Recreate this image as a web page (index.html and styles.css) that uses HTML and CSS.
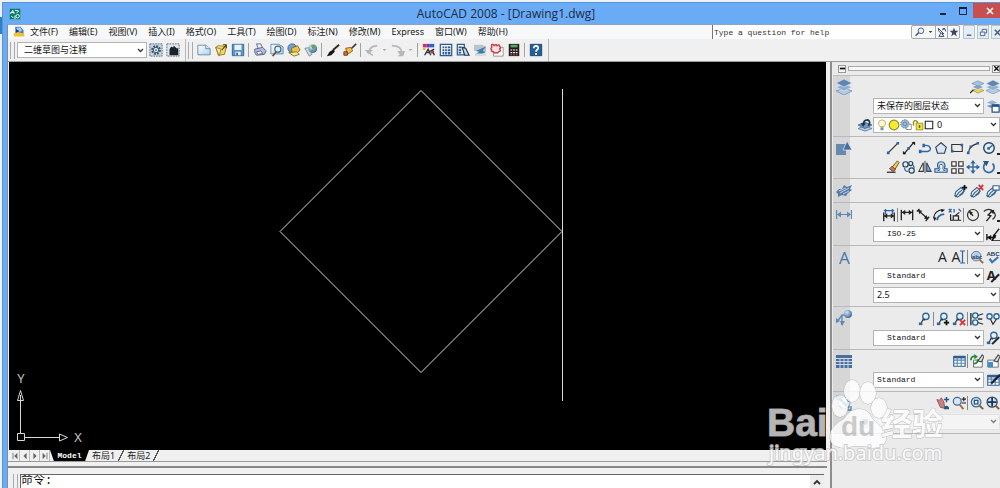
FILE: index.html
```html
<!DOCTYPE html>
<html lang="zh-CN">
<head>
<meta charset="utf-8">
<title>AutoCAD 2008 - [Drawing1.dwg]</title>
<link rel="stylesheet" href="styles.css">
</head>
<body>
<svg class="sprite" aria-hidden="true">
  <defs>
    <linearGradient id="paper" x1="0" y1="0" x2="1" y2="1"><stop offset="0" stop-color="#fff"/><stop offset="1" stop-color="#a9d3ee"/></linearGradient>
    <radialGradient id="ball" cx=".35" cy=".3" r=".8"><stop offset="0" stop-color="#cfe2f5"/><stop offset="1" stop-color="#2e5f99"/></radialGradient>
  </defs>
  <symbol id="logo" viewBox="0 0 16 16"><path fill="#0d7a69" d="M1 1h14v14H1z"/><path fill="none" stroke="#e8fff8" stroke-width="1.3" d="M2 8l3-5 2 5M8 3l5 1-3 3M3 11l3 2M8 10v5M2 6h5"/><circle cx="11.500" cy="11" r="2.300" fill="none" stroke="#e8fff8" stroke-width="1.300"/></symbol>
  <symbol id="doc" viewBox="0 0 16 16"><path fill="#3f7fc4" d="M3 1h7l4 5v6H3z"/><path fill="#9fd0f2" d="M5 2h5l2 4-4 3-4-1z"/><path fill="#f4c12c" d="M1 10l4-2 10 2v4H1z"/><path fill="#1e3e66" d="M4 4l5 3-5 2z"/></symbol>
  <symbol id="gear" viewBox="0 0 16 16"><path fill="#c9d4df" stroke="#53687e" stroke-dasharray="2 1" d="M1 1h14v14H1z"/><circle cx="8" cy="8" r="4" fill="none" stroke="#33506e" stroke-width="3" stroke-dasharray="2 1.100"/><circle cx="8" cy="8" r="3" fill="#e7eef5" stroke="#33506e"/><circle cx="8" cy="8" r="1" fill="#33506e"/></symbol>
  <symbol id="home" viewBox="0 0 16 16"><path fill="#e3e6e9" stroke="#53687e" stroke-dasharray="2 1" d="M1 1h14v14H1z"/><path fill="#1c2229" d="M4 14V7l2-3 2 1 1-2 3 3h2v8z"/></symbol>
  <symbol id="new" viewBox="0 0 16 16"><path fill="url(#paper)" stroke="#5f87a7" d="M1 2.500h9l5 4v7H1z"/><path fill="#dff0fb" stroke="#5f87a7" d="M10 2.500v4h5"/></symbol>
  <symbol id="open" viewBox="0 0 16 16"><path fill="#f2d668" stroke="#94762a" d="M2 5l3-2 9 1-2 9-7 1z"/><path fill="#fff0a8" stroke="#94762a" d="M2 5l6 2-2 8z"/><path d="M9 8l5-6M10 2h4v4" fill="none" stroke="#4d3c12" stroke-width="1.300"/></symbol>
  <symbol id="save" viewBox="0 0 16 16"><path fill="#5b93c5" stroke="#2f608f" d="M1.500 1.500h13v13h-13z"/><path fill="#e8f2fa" d="M4 2h8v6H4zM5 10h6v4H5z"/><path fill="#2f608f" d="M6 11h2v3H6z"/></symbol>
  <symbol id="print" viewBox="0 0 16 16"><path fill="#eef0f6" stroke="#5d6285" d="M4 1h5l2 5-5 1z"/><path fill="#b5bcdd" stroke="#535a86" d="M2 7l9-2 4 4-2 4-9 1-2-3z"/><path fill="#fff" stroke="#535a86" d="M4 10l5-1 2 3-5 1z"/></symbol>
  <symbol id="preview" viewBox="0 0 16 16"><path fill="url(#paper)" stroke="#5f87a7" d="M1 1.500h9l5 3v8H1z"/><circle cx="9" cy="7" r="3.500" fill="#d9effc" stroke="#476780" stroke-width="1.300"/><path stroke="#7a4f36" stroke-width="2" d="M7 10l-4 5"/></symbol>
  <symbol id="publish" viewBox="0 0 16 16"><circle cx="6" cy="6" r="5" fill="#6fa3d1" stroke="#345f8a"/><path fill="#e8c348" stroke="#7e6523" d="M5 6l7-3 3 5-3 3-6 1z"/><path fill="#f8e9a2" stroke="#7e6523" d="M2 11l9-1 3 3-6 2z"/></symbol>
  <symbol id="globe" viewBox="0 0 16 16"><path fill="#d6d9dd" stroke="#7b848c" d="M1 6l7-1 1 8-3 2z"/><circle cx="10" cy="6.500" r="5" fill="url(#ball)"/><path fill="#66a547" d="M8 3l4-1 1 3-3 2zM8 8l4 0-2 3z"/></symbol>
  <symbol id="brush" viewBox="0 0 16 16"><path stroke="#3a2b1a" stroke-width="2.200" d="M15 2L8 8"/><path fill="#161616" d="M9 7l1 3-4 4-5 1 3-5z"/></symbol>
  <symbol id="paint" viewBox="0 0 16 16"><path fill="#f0c050" stroke="#8b4c1d" d="M3 6l6-1 2 4-6 4z"/><path stroke="#3d3d3d" stroke-width="2" d="M10 6l5-5"/><path fill="#d8762b" stroke="#5e371c" d="M1 10h4v4H1z"/></symbol>
  <symbol id="undo" viewBox="0 0 16 16"><path fill="none" stroke="#b5b9bd" stroke-width="2" d="M9 14C2 12 4 4 14 3"/><path fill="#b5b9bd" d="M0 8h9l-5 5z"/></symbol>
  <symbol id="redo" viewBox="0 0 16 16"><path fill="none" stroke="#b5b9bd" stroke-width="2" d="M1 3c7 0 11 2 11 8"/><path fill="#b5b9bd" d="M7 9h9l-2 6H7l3-2z"/></symbol>
  <symbol id="props" viewBox="0 0 16 16"><path fill="#d22d6c" d="M1 1h4v4H1z"/><path fill="#7a35b5" d="M5 1h4v4H5z"/><path fill="#2e65c0" d="M9 1h5v4H9z"/><path fill="#e9b634" d="M1 5h3v3H1z"/><path fill="none" stroke="#283039" stroke-width="1.500" d="M3 14l4-7 3 7M8 10l6-3M12 8l2 6M5 11h4"/><path fill="#c03636" d="M10 9h3v3h-3z"/></symbol>
  <symbol id="grid" viewBox="0 0 16 16"><path fill="#eef5fc" stroke="#315a8b" stroke-width="1.400" d="M1.500 1.500h13v13h-13z"/><path fill="#315a8b" d="M4 4h2v2H4zM7 4h2v2H7zM10 4h3v2h-3zM4 7h2v2H4zM7 7h2v2H7zM10 7h3v2h-3zM4 10h2v3H4zM7 10h2v3H7zM10 10h3v3h-3z"/></symbol>
  <symbol id="palette" viewBox="0 0 16 16"><path fill="#f2f6fb" stroke="#315a8b" stroke-width="1.400" d="M1.500 1.500h8v12h-8z"/><path fill="#315a8b" d="M3 4h3v2H3zM3 7h3v2H3zM3 10h3v2H3z"/><path fill="#c6d6e8" stroke="#243952" stroke-width="1.400" d="M7 5l4 1 4 8h-5z"/></symbol>
  <symbol id="sheet" viewBox="0 0 16 16"><path fill="#b9c5ce" d="M1 2h9l5 2v5H1z"/><path fill="#3f7cae" d="M15 4L3 9l4 1-5 3h8l5-3-4-1z"/><path fill="#d5dde3" d="M3 12h12v3H3z"/></symbol>
  <symbol id="markup" viewBox="0 0 16 16"><path fill="#fff" stroke="#8a8a8a" d="M4 5h11v10H4z"/><path fill="#fbe3e5" stroke="#d33543" stroke-width="1.600" d="M2 2q2-1 3 1 2-2 3 0 3-2 3 1 2 2 0 3 2 3-1 3-1 2-3 1-2 1-3-1-3 0-2-2-2-2 0-3z"/></symbol>
  <symbol id="calc" viewBox="0 0 16 16"><path fill="#241f1e" d="M2 1h12v14H2z"/><path fill="#4fa96b" d="M4 2h8v3H4z"/><path stroke="#fff" stroke-width="1.400" stroke-dasharray="2 1" d="M4 8h8M4 11h8"/><path stroke="#c4483e" stroke-width="1.400" stroke-dasharray="2 1" d="M4 13.500h8"/></symbol>
  <symbol id="help" viewBox="0 0 16 16"><path fill="#245f98" stroke="#123e6b" d="M1.500 1.500h13v13h-13z"/><path fill="none" stroke="#fff" stroke-width="2" d="M5.500 6c0-4 5.500-3 5 0-.5 2-2.500 1.500-2.500 4"/><circle cx="8" cy="12.500" r="1.200" fill="#fff"/></symbol>
  <symbol id="search" viewBox="0 0 16 16"><circle cx="9.500" cy="6" r="4.500" fill="#e9f1fa" stroke="#4c5f7e" stroke-width="1.500"/><path stroke="#4c5f7e" stroke-width="2.600" d="M6 9l-5 5"/></symbol>
  <symbol id="antenna" viewBox="0 0 16 16"><path fill="none" stroke="#3b4d70" stroke-width="1.600" d="M2 2q0 8 9 9L2 2M6 10l-3 5h8l-3-4M9 2q5 0 5 5M8 5l5-3"/></symbol>
  <symbol id="star" viewBox="0 0 16 16"><path fill="#35486c" d="M8 1l2 5h5l-4 3.500L12.500 15 8 11.700 3.500 15 5 9.500 1 6h5z"/></symbol>
  <symbol id="layers" viewBox="0 0 16 16"><path fill="#b3cbe3" stroke="#5c7ea4" stroke-width=".6" d="M0 12l8-3 8 3-8 4z"/><path fill="#8caed0" stroke="#e4edf6" stroke-width=".6" d="M0 8l8-3 8 3-8 4z"/><path fill="#5f86b1" stroke="#e4edf6" stroke-width=".6" d="M0 4l8-4 8 4-8 4z"/></symbol>
  <symbol id="layeradd" viewBox="0 0 16 16"><path fill="#e8cf4f" stroke="#8e8337" stroke-width=".6" d="M3 12l7-3 6 3-7 3z"/><path fill="#7fa5c9" stroke="#fff" stroke-width=".6" d="M2 8l7-3 7 3-7 3z"/><path fill="#a8c2dc" stroke="#587ca2" stroke-width=".6" d="M2 4l7-3 7 3-7 3z"/><path stroke="#222" stroke-width="1.500" d="M0 15l4-4"/></symbol>
  <symbol id="layerwin" viewBox="0 0 16 16"><path fill="#6f98c1" stroke="#fff" stroke-width=".6" d="M0 8l7-3 7 3-7 3z"/><path fill="#93b4d4" stroke="#fff" stroke-width=".6" d="M0 4l7-3 7 3-7 3z"/><path fill="#fff" stroke="#255384" stroke-width="1.400" d="M7 7h8v8H7z"/><path fill="#255384" d="M7 6h8v3H7z"/></symbol>
  <symbol id="layerprev" viewBox="0 0 16 16"><path fill="#b3cbe3" stroke="#5c7ea4" d="M0 12l8-3 8 3-8 3z"/><path fill="#7399bf" stroke="#47698f" d="M0 8l8-3 8 3-8 4z"/><path fill="none" stroke="#1e3555" stroke-width="2" d="M6 8q0-6 5-6 4 2 1 7"/><path fill="#1e3555" d="M3 6h6L6 10z"/></symbol>
  <symbol id="bulb" viewBox="0 0 16 16"><path fill="#fffbcf" stroke="#b5a24c" d="M5 10Q2 7 4 3q4-4 8 0 2 4-1 7z"/><path fill="#7b90a6" d="M6 11h4v4H6z"/></symbol>
  <symbol id="sun" viewBox="0 0 16 16"><circle cx="8" cy="8" r="6.500" fill="#f6ec2c" stroke="#8e8c2b" stroke-width="1.500"/></symbol>
  <symbol id="frz" viewBox="0 0 16 16"><path fill="#fff" stroke="#6c737b" d="M8 7h7v7H8z"/><circle cx="6.500" cy="6.500" r="5.500" fill="#9fb9d0" stroke="#54799d" stroke-width="1.300" stroke-dasharray="2 1"/><circle cx="6.500" cy="6.500" r="2.500" fill="none" stroke="#54799d"/></symbol>
  <symbol id="lock" viewBox="0 0 16 16"><path fill="none" stroke="#9a9226" stroke-width="2" d="M2 9V4q2-4 5 0v3"/><path fill="#f1e436" stroke="#8b8322" d="M5.500 5.500h9v9h-9z"/><path fill="#6b6516" d="M9 8h2v4H9z"/></symbol>
  <symbol id="swatch" viewBox="0 0 16 16"><path fill="#fff" stroke="#222" stroke-width="1.700" d="M2 2h12v12H2z"/></symbol>
  <symbol id="shapes" viewBox="0 0 16 16"><path fill="#6789ae" d="M0 4h10v11H0z"/><path fill="#486f9e" stroke="#dfe6ee" stroke-width=".7" d="M11 1l5 9H7z"/></symbol>
  <symbol id="line" viewBox="0 0 16 16"><path stroke="#333" stroke-width="1.400" d="M3 13L13 3"/><path fill="#2c66a8" d="M1 12h3v3H1zM12 1h3v3h-3z"/></symbol>
  <symbol id="xline" viewBox="0 0 16 16"><path stroke="#222" stroke-width="1.500" d="M2 15L14 1"/><path fill="#2c66a8" d="M6 7h3v3H6z"/><path fill="#222" d="M11 1h4v4zM1 11v4h4z"/></symbol>
  <symbol id="pline" viewBox="0 0 16 16"><path fill="none" stroke="#2c66a8" stroke-width="1.600" d="M2 12h9q4-1 3-4-1-3-5-3H7"/><path fill="#2c66a8" d="M1 10h3v4H1zM5 3h3v4H5z"/></symbol>
  <symbol id="polygon" viewBox="0 0 16 16"><path fill="#dbe5ef" stroke="#27445f" stroke-width="1.300" d="M8 2l6 5-2 7H4L2 7z"/></symbol>
  <symbol id="rect" viewBox="0 0 16 16"><path fill="none" stroke="#333" stroke-width="1.300" d="M2 4h12v8H2z"/><path fill="#2c66a8" d="M1 10h3v3H1zM12 3h3v3h-3z"/></symbol>
  <symbol id="arc" viewBox="0 0 16 16"><path fill="none" stroke="#333" stroke-width="1.300" d="M3 13Q4 5 13 3"/><path fill="#2c66a8" d="M1 12h3v3H1zM4 5h3v3H4zM12 1h3v3h-3z"/></symbol>
  <symbol id="circle" viewBox="0 0 16 16"><circle cx="8" cy="8" r="6" fill="#e6edf4" stroke="#27445f" stroke-width="1.600"/><path stroke="#2c66a8" stroke-width="1.500" d="M8 8l4-3"/><path fill="#2c66a8" d="M6 7h3v3H6z"/></symbol>
  <symbol id="erase" viewBox="0 0 16 16"><path fill="#f0c94d" stroke="#5d4b24" d="M7 8l6-7 2 2-5 8z"/><path fill="#d76c64" stroke="#5d4b24" d="M4 10l3-3 4 4-3 2z"/><path stroke="#333" stroke-width="1.500" d="M1 14h10"/></symbol>
  <symbol id="copy" viewBox="0 0 16 16"><g fill="#e4ebf2" stroke="#27445f" stroke-width="1.400"><circle cx="4" cy="5" r="3"/><circle cx="10" cy="4" r="2.300"/><circle cx="11" cy="12" r="3"/></g><path fill="none" stroke="#2c66a8" stroke-width="1.400" d="M3 9q0 4 4 4M13 6l1 3"/></symbol>
  <symbol id="mirror" viewBox="0 0 16 16"><path fill="#fff" stroke="#333" stroke-width="1.200" d="M6 3v10H1z"/><path fill="#89a9c9" stroke="#27445f" stroke-width="1.200" d="M10 3v10h5z"/><path stroke="#333" d="M8 1v14"/></symbol>
  <symbol id="offset" viewBox="0 0 16 16"><path fill="#c6d9eb" stroke="#2c5e91" stroke-width="1.300" d="M1 14v-4h4Q2 2 8 2t4 8h3v4z"/><path fill="#fff" stroke="#2c5e91" d="M4 12h2l1-2Q5 5 8 5t2 5l1 2h2"/></symbol>
  <symbol id="array" viewBox="0 0 16 16"><path fill="#fff" stroke="#333" stroke-width="1.300" d="M2 2h5v5H2zM10 2h5v5h-5zM2 10h5v5H2zM10 10h5v5h-5z"/></symbol>
  <symbol id="move" viewBox="0 0 16 16"><path stroke="#386fa7" stroke-width="1.700" d="M8 2v12M2 8h12"/><path fill="#2c66a8" d="M8 0l3 4H5zM8 16l3-4H5zM0 8l4-3v6zM16 8l-4-3v6z"/></symbol>
  <symbol id="rotate" viewBox="0 0 16 16"><path fill="none" stroke="#386fa7" stroke-width="2" d="M5 3a6 6 0 1 0 7 1"/><path fill="#27568a" d="M1 1h7L5 7z"/></symbol>
  <symbol id="stamp" viewBox="0 0 16 16"><path fill="#557ca8" d="M0 10l3-3 3 0 2-4 3 2 5-2-2 4 2 1-4 3-2 3-4-1-4 2 0-3z"/><path stroke="#dbe4ee" stroke-width=".8" d="M4 11l9-5M3 9l7-3M7 12l6-3"/></symbol>
  <symbol id="blk" viewBox="0 0 16 16"><path fill="#e8f0f7" stroke="#33638f" stroke-width="1.300" d="M2 9l6-5 3 3-1 4-6 4-3-2z"/><path fill="none" stroke="#33638f" stroke-width="1.300" d="M4 11l5-4M6 13l6-5M1 15l4-4"/></symbol>
  <symbol id="blkadd" viewBox="0 0 16 16"><use href="#blk"/><path stroke="#111" stroke-width="2" d="M12 1v6M9 4h6"/></symbol>
  <symbol id="blkdel" viewBox="0 0 16 16"><use href="#blk"/><path stroke="#d8323c" stroke-width="2" d="M10 1l5 6M15 1l-5 6"/></symbol>
  <symbol id="blkwin" viewBox="0 0 16 16"><use href="#blk"/><path fill="#fff" stroke="#33638f" stroke-width="1.300" d="M8 2h7v5H8z"/></symbol>
  <symbol id="dimside" viewBox="0 0 16 16"><path stroke="#6288b2" stroke-width="1.200" d="M.6 4v9M15.400 4v9M2 8.500h12"/><path fill="#6288b2" d="M1 8.500l4-3v6zM15 8.500l-4-3v6z"/></symbol>
  <symbol id="dimq" viewBox="0 0 16 16"><path stroke="#2c66a8" stroke-width="1.500" d="M2 3h12M4 1v6M12 1v6"/><path stroke="#222" stroke-width="1.500" d="M2 5v10M14 5v10M3 9h10"/><path fill="#222" d="M2 9l4-3v6zM14 9l-4-3v6z"/></symbol>
  <symbol id="dimlin" viewBox="0 0 16 16"><path stroke="#222" stroke-width="1.500" d="M1.500 2v12M14.500 2v12M2 5h12"/><path fill="#222" d="M2 5l4-3v6zM14 5l-4-3v6z"/></symbol>
  <symbol id="dimali" viewBox="0 0 16 16"><path stroke="#222" stroke-width="1.500" d="M4 1L1 4M15 10l-4 5M3 3l10 9"/><path fill="#222" d="M2 2l5 1-3 4zM14 13l-5-1 3-4z"/></symbol>
  <symbol id="dimarc" viewBox="0 0 16 16"><path fill="none" stroke="#222" stroke-width="1.400" d="M2 11Q3 3 12 2"/><path fill="none" stroke="#2c66a8" stroke-width="2" d="M6 14q0-6 8-7"/><path fill="#222" d="M1 10l4 1-2 4zM10 1l5 1-4 3z"/></symbol>
  <symbol id="dimord" viewBox="0 0 16 16"><path fill="none" stroke="#2c66a8" stroke-width="1.500" d="M1 1l3 4M4 1L1 5M7 1v4M12 1l3 3"/><path fill="none" stroke="#222" stroke-width="1.400" d="M3 7v7h12M6 14V9h6v5M8 9l5-4"/></symbol>
  <symbol id="dimrad" viewBox="0 0 16 16"><circle cx="8" cy="8" r="6.300" fill="none" stroke="#333" stroke-width="1.400"/><path stroke="#222" stroke-width="1.500" d="M8 9L4 4"/><path fill="#222" d="M3 3l5 2-3 3z"/></symbol>
  <symbol id="dimjog" viewBox="0 0 16 16"><path fill="none" stroke="#333" stroke-width="1.400" d="M2 4q6-5 11 0t-1 9"/><path fill="none" stroke="#222" stroke-width="1.600" d="M12 3L7 8l3 1-5 6"/><path fill="#222" d="M9 3l5-1-1 5z"/></symbol>
  <symbol id="dimsty" viewBox="0 0 16 16"><path stroke="#222" stroke-width="1.600" d="M1 8v7M1 12h10M8 11l7-9"/><path fill="#111" d="M1 12l5-3v6zM9 8l3 2-4 5h8v1H6z"/></symbol>
  <symbol id="leadside" viewBox="0 0 16 16"><path fill="none" stroke="#6288b2" stroke-width="1.300" d="M11 5H6L1 12M6 5v10"/><path fill="#6288b2" d="M0 13V8l4 3zM6 16l-2-5h5z"/><circle cx="12" cy="4" r="4" fill="url(#ball)"/></symbol>
  <symbol id="lead" viewBox="0 0 16 16"><circle cx="9" cy="5" r="3.600" fill="#e8f1f9" stroke="#2d6598" stroke-width="1.500"/><path fill="none" stroke="#333" stroke-width="1.300" d="M6 8l-3 6M8 9H5"/><path fill="#2c66a8" d="M1 12h4v3H1z"/></symbol>
  <symbol id="leadadd" viewBox="0 0 16 16"><use href="#lead"/><path stroke="#111" stroke-width="2" d="M12 9v6M9 12h6"/></symbol>
  <symbol id="leaddel" viewBox="0 0 16 16"><use href="#lead"/><path stroke="#d8323c" stroke-width="2" d="M9 9l6 6M15 9l-6 6"/></symbol>
  <symbol id="leadali" viewBox="0 0 16 16"><path stroke="#222" stroke-width="1.500" d="M1 1v14"/><g fill="#e8f1f9" stroke="#2d6598" stroke-width="1.500"><circle cx="6" cy="4" r="3"/><circle cx="6" cy="12" r="3"/></g><path stroke="#333" stroke-width="1.500" d="M9 4l6-2M9 12l6 2M9 8h5"/></symbol>
  <symbol id="leadcol" viewBox="0 0 16 16"><g fill="#e8f1f9" stroke="#2d6598" stroke-width="1.500"><circle cx="4" cy="5" r="3"/><circle cx="12" cy="5" r="3"/></g><path fill="none" stroke="#333" stroke-width="1.400" d="M5 8l3 6 4-6"/></symbol>
  <symbol id="leadsty" viewBox="0 0 16 16"><use href="#lead"/><path stroke="#222" stroke-width="2.400" d="M15 7l-4 4-4 4"/></symbol>
  <symbol id="tblside" viewBox="0 0 16 16"><path fill="#486f9e" d="M0 2h16v13H0z"/><path stroke="#cfdae6" d="M0 5.500h16M0 8.500h16M0 11.500h16M4 5v10M8 5v10M12 5v10"/></symbol>
  <symbol id="tbl" viewBox="0 0 16 16"><path fill="#fff" stroke="#315f93" stroke-width="1.300" d="M2 3h13v11H2z"/><path stroke="#5784b2" stroke-width="1.200" d="M2 7h13M2 10.500h13M6 4v10M10.500 4v10"/><path fill="#315f93" d="M2 2h13v3H2z"/></symbol>
  <symbol id="tblup" viewBox="0 0 16 16"><path fill="#fff" stroke="#666" d="M4 7h10v8H4z"/><path fill="none" stroke="#1f8c39" stroke-width="2" d="M1 7q0-5 5-4M9 6q0 5-5 5"/><path fill="#1f8c39" d="M5 0l4 3-4 3z"/><path fill="#ddd" stroke="#444" stroke-width="1.200" d="M9 8l5-7 2 2-3 6z"/></symbol>
  <symbol id="tblext" viewBox="0 0 16 16"><path fill="#fff" stroke="#666" d="M2 7h12v8H2z"/><path fill="#3c90cf" d="M2 9h6v6H2z"/><path fill="#ddd" stroke="#444" stroke-width="1.200" d="M9 8l5-7 2 2-3 6z"/></symbol>
  <symbol id="tblsty" viewBox="0 0 16 16"><use href="#tbl"/><path stroke="#14233a" stroke-width="2.600" d="M16 2l-6 6-4 4"/></symbol>
  <symbol id="orbit" viewBox="0 0 16 16"><circle cx="8" cy="8" r="6" fill="#eef3f8" stroke="#86a3c3"/><path stroke="#5078a5" stroke-width="2.500" stroke-dasharray="5 1" d="M3 3l10 10"/><path fill="none" stroke="#5078a5" stroke-width="1.300" d="M1 5V1h4M15 11v4h-4M3 11l3 2M11 4l2 3"/></symbol>
  <symbol id="pan" viewBox="0 0 16 16"><path fill="#c98080" stroke="#8b4f52" d="M1 4l3 1 2-3 3 5 1 7-5-1z"/><path stroke="#27568a" stroke-width="1.700" d="M12 1v6M9 4h6"/><path fill="#27568a" d="M9 15q0-4 3-4t3 4z"/></symbol>
  <symbol id="zoomrt" viewBox="0 0 16 16"><circle cx="6" cy="6" r="4.500" fill="#d5e7f6" stroke="#466c92" stroke-width="1.400"/><path stroke="#a06b3c" stroke-width="2.200" d="M9 10l4 5"/><path stroke="#222" stroke-width="1.300" d="M13.500 1v5M11 3.500h5M11 8h5"/></symbol>
  <symbol id="zoomwin" viewBox="0 0 16 16"><circle cx="7" cy="7" r="5.500" fill="#c9dff2" stroke="#466c92" stroke-width="1.400"/><path fill="#fff" stroke="#27568a" stroke-width="1.500" d="M5 5h4v4H5z"/><path stroke="#805a36" stroke-width="2.300" d="M11 11l4 4"/></symbol>
  <symbol id="zoomext" viewBox="0 0 16 16"><circle cx="7" cy="7" r="5.800" fill="#c9dff2" stroke="#31445a" stroke-width="1.400"/><path stroke="#1d344e" stroke-width="2" d="M7 2v10M2 7h10"/><path stroke="#805a36" stroke-width="2.300" d="M11 11l4 4"/></symbol>
  <symbol id="camera" viewBox="0 0 16 16"><circle cx="8" cy="8" r="5.500" fill="#d8e2ec" stroke="#b8c6d5"/><path fill="#4d7299" d="M5 5h6v4l-3 3-3-3z"/></symbol>
</svg>

<div class="desktop">
<div class="window">
  <header class="titlebar">
    <svg class="app-logo"><use href="#logo"/></svg>
    <h1 class="title">AutoCAD 2008 - [Drawing1.dwg]</h1>
    <div class="caption">
      <button class="cap" aria-label="最小化"><svg viewBox="0 0 10 10"><path d="M2 8h6" stroke="#14213a" stroke-width="2"/></svg></button>
      <button class="cap" aria-label="最大化"><svg viewBox="0 0 10 10"><path d="M1.500 2v6.500h7V2" fill="none" stroke="#14213a"/><path d="M1 2h8" stroke="#14213a" stroke-width="2"/></svg></button>
      <button class="cap close" aria-label="关闭"><svg viewBox="0 0 10 10"><path d="M2 2l6 6M8 2L2 8" stroke="#fff" stroke-width="1.500"/></svg></button>
    </div>
  </header>

  <div class="frame">
    <div class="menubar">
      <svg class="doc-icon"><use href="#doc"/></svg>
      <nav class="menus">
        <button>文件(F)</button><button>编辑(E)</button><button>视图(V)</button><button>插入(I)</button><button>格式(O)</button><button>工具(T)</button><button>绘图(D)</button><button>标注(N)</button><button>修改(M)</button><button>Express</button><button>窗口(W)</button><button>帮助(H)</button>
      </nav>
      <input class="ask" type="text" placeholder="Type a question for help" aria-label="Type a question for help">
      <div class="info">
        <button class="wide" aria-label="搜索"><svg><use href="#search"/></svg><i class="dd"></i></button>
        <button aria-label="通讯中心"><svg><use href="#antenna"/></svg></button>
        <button aria-label="收藏夹"><svg><use href="#star"/></svg></button>
      </div>
      <div class="mdi">
        <button aria-label="最小化图形"><svg viewBox="0 0 10 10"><path d="M2 8h5" stroke="#4a6078" stroke-width="1.500"/></svg></button>
        <button aria-label="还原图形"><svg viewBox="0 0 10 10"><path d="M3.500 4V1.500h5v4H7M1.500 4.500h5v4h-5z" fill="none" stroke="#4a6078"/></svg></button>
        <button aria-label="关闭图形"><svg viewBox="0 0 10 10"><path d="M2 2l6 6M8 2L2 8" stroke="#4a6078" stroke-width="1.700"/></svg></button>
      </div>
    </div>

    <div class="toolbars">
      <div class="toolbar">
        <i class="grip"></i>
        <select class="combo workspace" aria-label="工作空间"><option>二维草图与注释</option></select>
        <button class="tool" aria-label="工作空间设置"><svg><use href="#gear"/></svg></button>
        <button class="tool" aria-label="我的工作空间"><svg><use href="#home"/></svg></button>
      </div>
      <div class="toolbar">
        <i class="grip"></i>
        <button class="tool" aria-label="新建"><svg><use href="#new"/></svg></button>
        <button class="tool" aria-label="打开"><svg><use href="#open"/></svg></button>
        <button class="tool" aria-label="保存"><svg><use href="#save"/></svg></button>
        <i class="sep"></i>
        <button class="tool" aria-label="打印"><svg><use href="#print"/></svg></button>
        <button class="tool" aria-label="打印预览"><svg><use href="#preview"/></svg></button>
        <button class="tool" aria-label="发布"><svg><use href="#publish"/></svg></button>
        <button class="tool" aria-label="三维 DWF"><svg><use href="#globe"/></svg></button>
        <i class="sep"></i>
        <button class="tool" aria-label="特性匹配"><svg><use href="#brush"/></svg></button>
        <button class="tool" aria-label="块编辑器"><svg><use href="#paint"/></svg></button>
        <i class="sep"></i>
        <button class="tool" aria-label="放弃"><svg><use href="#undo"/></svg></button>
        <button class="drop" aria-label="放弃列表"><i class="dd pale"></i></button>
        <button class="tool" aria-label="重做"><svg><use href="#redo"/></svg></button>
        <button class="drop" aria-label="重做列表"><i class="dd pale"></i></button>
        <i class="sep"></i>
        <button class="tool" aria-label="特性"><svg><use href="#props"/></svg></button>
        <button class="tool" aria-label="设计中心"><svg><use href="#grid"/></svg></button>
        <button class="tool" aria-label="工具选项板"><svg><use href="#palette"/></svg></button>
        <button class="tool" aria-label="图纸集"><svg><use href="#sheet"/></svg></button>
        <button class="tool" aria-label="标记集"><svg><use href="#markup"/></svg></button>
        <button class="tool" aria-label="计算器"><svg><use href="#calc"/></svg></button>
        <i class="sep"></i>
        <button class="tool" aria-label="帮助"><svg><use href="#help"/></svg></button>
      </div>
    </div>

    <div class="work">
      <main class="editor">
        <div class="canvas">
          <svg class="drawing" width="817" height="388" role="img" aria-label="菱形与竖线">
            <path d="M412 28.500L553 169.500L412 310.500L271 169.500Z"/>
            <path d="M553.500 27v312"/>
          </svg>
          <svg class="ucs" width="80" height="76" role="img" aria-label="坐标系">
            <path d="M8.500 61.500h7v7h-7zM11.500 61V23M15.500 65.500H50M8.500 28.500h6l-3-10zM50.500 62v7l8-3.500z"/>
            <text x="12" y="11">Y</text><text x="69" y="70">X</text>
          </svg>
        </div>
        <div class="tabs">
          <button class="nav" aria-label="第一个"><svg viewBox="0 0 10 10"><path d="M2 1h1v8H2zM8 1v8L4 5z"/></svg></button>
          <button class="nav" aria-label="上一个"><svg viewBox="0 0 10 10"><path d="M7 1v8L3 5z"/></svg></button>
          <button class="nav" aria-label="下一个"><svg viewBox="0 0 10 10"><path d="M3 1v8l4-4z"/></svg></button>
          <button class="nav" aria-label="最后一个"><svg viewBox="0 0 10 10"><path d="M7 1h1v8H7zM2 1v8l4-4z"/></svg></button>
          <button class="tab active">Model</button>
          <button class="tab">布局1</button><i class="slash"></i>
          <button class="tab">布局2</button><i class="slash"></i>
        </div>
        <div class="command">
          <i class="grip"></i>
          <div class="console">
            <textarea aria-label="命令行" spellcheck="false">命令:</textarea>
            <button class="up" aria-label="向上滚动"><svg viewBox="0 0 10 10"><path d="M2 7l3-3 3 3" fill="none" stroke="#333" stroke-width="1.800"/></svg></button>
          </div>
        </div>
      </main>

      <aside class="dashboard">
        <div class="dash-head">
          <button aria-label="折叠"><svg viewBox="0 0 8 8"><path d="M1 4h6" stroke="#111" stroke-width="2"/></svg></button>
          <i class="dash-grip"></i>
          <button aria-label="关闭面板"><svg viewBox="0 0 8 8"><path d="M1.500 1.500l5 5M6.500 1.500l-5 5" stroke="#111" stroke-width="1.700"/></svg></button>
        </div>

        <section class="group">
          <div class="side"><svg><use href="#layers"/></svg></div>
          <div class="rows">
            <div class="row"><button class="ico" aria-label="图层特性"><svg><use href="#layeradd"/></svg></button><button class="ico" aria-label="图层"><svg><use href="#layers"/></svg></button></div>
            <div class="row"><select class="combo" aria-label="图层状态"><option>未保存的图层状态</option></select><button class="ico" aria-label="图层状态管理器"><svg><use href="#layerwin"/></svg></button></div>
            <div class="row"><button class="ico" aria-label="上一个图层"><svg><use href="#layerprev"/></svg></button>
              <div class="layer-combo"><svg><use href="#bulb"/></svg><svg><use href="#sun"/></svg><svg><use href="#frz"/></svg><svg><use href="#lock"/></svg><svg class="sw"><use href="#swatch"/></svg><select class="combo bare" aria-label="图层"><option>0</option></select></div></div>
          </div>
        </section>

        <section class="group">
          <div class="side"><svg><use href="#shapes"/></svg></div>
          <div class="rows">
            <div class="row more"><button class="ico" aria-label="直线"><svg><use href="#line"/></svg></button><button class="ico" aria-label="构造线"><svg><use href="#xline"/></svg></button><button class="ico" aria-label="多段线"><svg><use href="#pline"/></svg></button><button class="ico" aria-label="正多边形"><svg><use href="#polygon"/></svg></button><button class="ico" aria-label="矩形"><svg><use href="#rect"/></svg></button><button class="ico" aria-label="圆弧"><svg><use href="#arc"/></svg></button><button class="ico" aria-label="圆"><svg><use href="#circle"/></svg></button></div>
            <div class="row more"><button class="ico" aria-label="删除"><svg><use href="#erase"/></svg></button><button class="ico" aria-label="复制"><svg><use href="#copy"/></svg></button><button class="ico" aria-label="镜像"><svg><use href="#mirror"/></svg></button><button class="ico" aria-label="偏移"><svg><use href="#offset"/></svg></button><button class="ico" aria-label="阵列"><svg><use href="#array"/></svg></button><button class="ico" aria-label="移动"><svg><use href="#move"/></svg></button><button class="ico" aria-label="旋转"><svg><use href="#rotate"/></svg></button></div>
          </div>
        </section>

        <section class="group roomy">
          <div class="side"><svg><use href="#stamp"/></svg></div>
          <div class="rows">
            <div class="row"><button class="ico" aria-label="添加比例"><svg><use href="#blkadd"/></svg></button><button class="ico" aria-label="删除比例"><svg><use href="#blkdel"/></svg></button><button class="ico" aria-label="比例列表"><svg><use href="#blkwin"/></svg></button></div>
          </div>
        </section>

        <section class="group roomy">
          <div class="side"><svg><use href="#dimside"/></svg></div>
          <div class="rows">
            <div class="row more"><button class="ico" aria-label="快速标注"><svg><use href="#dimq"/></svg></button><i class="bar"></i><button class="ico" aria-label="线性标注"><svg><use href="#dimlin"/></svg></button><button class="ico" aria-label="对齐标注"><svg><use href="#dimali"/></svg></button><button class="ico" aria-label="弧长标注"><svg><use href="#dimarc"/></svg></button><button class="ico" aria-label="坐标标注"><svg><use href="#dimord"/></svg></button><i class="bar"></i><button class="ico" aria-label="半径标注"><svg><use href="#dimrad"/></svg></button><button class="ico" aria-label="折弯标注"><svg><use href="#dimjog"/></svg></button></div>
            <div class="row"><select class="combo mono inset" aria-label="标注样式"><option>ISO-25</option></select><button class="ico" aria-label="标注样式管理器"><svg><use href="#dimsty"/></svg></button></div>
          </div>
        </section>

        <section class="group">
          <div class="side letter">A</div>
          <div class="rows">
            <div class="row"><button class="ico glyph" aria-label="多行文字">A</button><button class="ico glyph" aria-label="单行文字">A<svg class="caret" viewBox="0 0 5 14"><path fill="none" stroke="#2c66a8" stroke-width="1.200" d="M0 1h5M2.500 1v12M0 13h5"/></svg></button><i class="bar"></i><button class="ico" aria-label="查找"><svg viewBox="0 0 16 16"><circle cx="7" cy="7" r="5.500" fill="#b7d2ec" stroke="#557698"/><text class="mini" x="8" y="10">abc</text><path stroke="#a06b3c" stroke-width="2.200" d="M11 11l4 4"/></svg></button><button class="ico" aria-label="拼写检查"><svg viewBox="0 0 16 16"><text class="mini" x="8" y="7">ABC</text><path fill="none" stroke="#3b77b4" stroke-width="2.500" d="M4 10l3 4 7-6"/></svg></button></div>
            <div class="row"><select class="combo mono inset" aria-label="文字样式"><option>Standard</option></select><button class="ico" aria-label="文字样式管理器"><svg viewBox="0 0 16 16"><text class="heavy" x="6" y="13">A</text><path stroke="#222" stroke-width="2.400" d="M15 6l-6 6-3 3"/></svg></button></div>
            <div class="row"><select class="combo full" aria-label="文字高度"><option>2.5</option></select></div>
          </div>
        </section>

        <section class="group roomy">
          <div class="side"><svg><use href="#leadside"/></svg></div>
          <div class="rows">
            <div class="row"><button class="ico" aria-label="多重引线"><svg><use href="#lead"/></svg></button><i class="bar"></i><button class="ico" aria-label="添加引线"><svg><use href="#leadadd"/></svg></button><button class="ico" aria-label="删除引线"><svg><use href="#leaddel"/></svg></button><i class="bar"></i><button class="ico" aria-label="对齐引线"><svg><use href="#leadali"/></svg></button><button class="ico" aria-label="合并引线"><svg><use href="#leadcol"/></svg></button></div>
            <div class="row"><select class="combo mono inset" aria-label="引线样式"><option>Standard</option></select><button class="ico" aria-label="引线样式管理器"><svg><use href="#leadsty"/></svg></button></div>
          </div>
        </section>

        <section class="group">
          <div class="side"><svg><use href="#tblside"/></svg></div>
          <div class="rows">
            <div class="row"><button class="ico" aria-label="表格"><svg><use href="#tbl"/></svg></button><i class="bar"></i><button class="ico" aria-label="更新表格"><svg><use href="#tblup"/></svg></button><button class="ico" aria-label="数据提取"><svg><use href="#tblext"/></svg></button></div>
            <div class="row"><select class="combo mono" aria-label="表格样式"><option>Standard</option></select><button class="ico" aria-label="表格样式管理器"><svg><use href="#tblsty"/></svg></button></div>
          </div>
        </section>

        <section class="group">
          <div class="side"><svg><use href="#orbit"/></svg></div>
          <div class="rows">
            <div class="row"><button class="ico" aria-label="平移"><svg><use href="#pan"/></svg></button><button class="ico" aria-label="实时缩放"><svg><use href="#zoomrt"/></svg></button><i class="bar"></i><button class="ico" aria-label="窗口缩放"><svg><use href="#zoomwin"/></svg></button><button class="ico" aria-label="范围缩放"><svg><use href="#zoomext"/></svg></button></div>
            <div class="row"><button class="ico" aria-label="视图"><svg><use href="#camera"/></svg></button><select class="combo full off" aria-label="视图列表" disabled><option></option></select></div>
          </div>
        </section>
      </aside>
    </div>
  </div>
</div>

<svg class="watermark" width="184" height="90" role="img" aria-label="Baidu 经验 jingyan.baidu.com">
  <g class="wm-paw">
    <ellipse cx="76" cy="28" rx="8" ry="11"/><ellipse cx="88" cy="13" rx="8" ry="11"/><ellipse cx="104" cy="15" rx="8" ry="11"/><ellipse cx="115" cy="30" rx="8" ry="10"/>
    <path d="M95 31q9 0 13 9l12 12q7 17-11 18-7-2-14-2t-14 2q-19-1-14-17 4-7 13-12 6-10 15-10z"/>
  </g>
  <text class="wm-big" x="3" y="58">Bai</text>
  <text class="wm-du" x="77" y="58">du</text>
  <text class="wm-cjk" x="117" y="57">经验</text>
  <text class="wm-url" x="5" y="82">jingyan.baidu.com</text>
</svg>
</div>
</body>
</html>
```
FILE: styles.css
```css
* { box-sizing: border-box; }
html, body { margin: 0; height: 100%; }
body {
  overflow: hidden;
  background: #eef1f4;
  font: 9px/12px "Noto Sans", "Noto Sans CJK SC", sans-serif;
  color: #1a1a1a;
}
button { margin: 0; padding: 0; border: 0; background: none; font: inherit; color: inherit; display: flex; align-items: center; justify-content: center; }
.sprite { position: absolute; width: 0; height: 0; }
svg { display: block; flex: none; }
i { display: block; flex: none; }

.desktop {
  position: relative;
  height: 100vh;
  padding: 2px 0 0 2px;
  background: linear-gradient(#eaf2f8 17px, #2f7fc4 17px, #2f7fc4 34px, #eaf2f8 34px);
}
.window { height: 100%; display: flex; flex-direction: column; background: #6aabf6; border-top: 1px solid #5b94d4; border-left: 1px solid #5b94d4; }

/* Title bar */
.titlebar { height: 21px; flex: none; display: flex; align-items: center; padding-left: 6px; }
.app-logo { width: 12px; height: 12px; }
.title { flex: 1; margin: 0; padding-left: 58px; text-align: center; font: 400 12px/20px "Open Sans", "Noto Sans", sans-serif; color: #1b2c47; }
.caption { display: flex; align-self: flex-start; }
.cap { width: 20px; height: 15px; }
.cap svg { width: 10px; height: 10px; }
.cap.close { width: 27px; background: #c84f50; }
.cap.close svg { margin-left: 6px; }

.frame { flex: 1; min-height: 0; margin-left: 4px; border-left: 1px solid #7d8fa5; border-top: 1px solid #8fa3ba; display: flex; flex-direction: column; background: #f0f0f0; }

/* Menu bar */
.menubar { height: 14px; flex: none; display: flex; align-items: center; background: #f7f8fa; padding-left: 5px; overflow: hidden; }
.doc-icon { width: 12px; height: 12px; }
.menus { display: flex; gap: 11px; padding-left: 5px; flex: 1; white-space: nowrap; }
.ask { width: 199px; height: 14px; border: 0; border-left: 1px solid #777; padding: 0 1px; background: #fff; font: 8px/12px "Liberation Mono", monospace; color: #333; }
.ask::placeholder { color: #333; opacity: 1; }
.info { display: flex; height: 14px; border: 1px solid #a5a9ad; border-radius: 2px; }
.info button { width: 12px; border-left: 1px solid #a5a9ad; }
.info .wide { width: 23px; border-left: 0; gap: 4px; }
.info svg { width: 10px; height: 10px; }
.dd { width: 4px; height: 2px; background: #444; clip-path: polygon(0 0, 100% 0, 50% 100%); }
.dd.pale { background: #aaa; }
.mdi { display: flex; gap: 2px; margin-left: 3px; width: 37px; overflow: hidden; }
.mdi button { flex: none; width: 12px; height: 14px; border: 1px solid #b3c4d3; background: #e3eef7; }
.mdi svg { width: 9px; height: 9px; }

/* Toolbars */
.toolbars { height: 23px; flex: none; display: flex; background: #f0f0f0; border-bottom: 1px solid #9b9b9b; }
.toolbar { display: flex; align-items: center; padding: 1px 4px 1px 2px; border-right: 1px solid #b8b8b8; }
.grip { width: 5px; height: 17px; border-left: 1px solid #aaa; border-right: 1px solid #aaa; margin-right: 2px; }
.workspace { width: 130px; margin-right: 1px; }
.tool { width: 17px; height: 18px; }
.tool svg { width: 14px; height: 14px; }
.drop { width: 9px; height: 18px; }
.sep { width: 1px; height: 14px; margin: 0 2px; background: #a3a3a3; }

.combo {
  appearance: none;
  height: 16px;
  margin: 0;
  padding: 0 12px 0 3px;
  border: 1px solid #b4b4b4;
  border-radius: 0;
  background: #fff url("data:image/svg+xml,%3Csvg xmlns='http://www.w3.org/2000/svg' width='7' height='5'%3E%3Cpath d='M1 1l2.500 2.500L6 1' fill='none' stroke='%23333' stroke-width='1.300'/%3E%3C/svg%3E") no-repeat right 2px center;
  font: 9px/12px "Noto Sans", "Noto Sans CJK SC", sans-serif;
  color: #111;
}
.combo.workspace { padding-left: 6px; }

/* Drawing area */
.work { flex: 1; min-height: 0; display: flex; }
.editor { flex: 1; min-width: 0; display: flex; flex-direction: column; padding-right: 3px; }
.canvas { flex: 1; min-height: 0; position: relative; overflow: hidden; background: #000; margin: 0 1px; }
.drawing, .ucs { position: absolute; left: 0; fill: none; stroke: #d8d8d8; }
.drawing { top: 0; }
.ucs { bottom: 2px; }
.ucs text { fill: #ccc; stroke: none; font: 13px "Open Sans", sans-serif; text-anchor: middle; }

.tabs { height: 12px; flex: none; display: flex; align-items: stretch; border-bottom: 1px solid #999; padding-left: 2px; }
.nav { width: 10px; border-right: 1px solid #bbb; }
.nav svg { width: 8px; height: 8px; fill: #666; }
.tab { padding: 0 3px; }
.tab.active { width: 39px; padding: 0; background: #000; color: #fff; clip-path: polygon(0 0, 100% 0, 90% 100%, 10% 100%); font: bold 8px/10px "Liberation Mono", monospace; }
.slash { width: 6px; height: 11px; background: linear-gradient(to bottom right, transparent 43%, #555 43%, #555 57%, transparent 57%); }

.command { height: 22px; flex: none; margin-top: 4px; border-top: 2px solid #888; padding: 6px 3px 0 5px; display: flex; background: #f0f0f0; overflow: hidden; }
.console { flex: 1; display: flex; border-top: 1px solid #666; border-left: 1px solid #666; background: #fff; }
.console textarea { flex: 1; min-width: 0; height: 13px; border: 0; margin: 0; padding: 0; resize: none; overflow: hidden; outline: 0; background: #fff; font: 12px/13px "Liberation Mono", "Noto Sans CJK SC", monospace; color: #111; }
.up { width: 14px; height: 14px; background: #ededed; }
.up svg { width: 10px; height: 10px; }

/* Dashboard */
.dashboard { width: 170px; flex: none; border-left: 2px solid #8d8d8d; padding-left: 1px; background: #ebebeb; }
.dash-head { height: 14px; display: flex; align-items: center; gap: 2px; padding-left: 5px; border-bottom: 1px solid #bdbdbd; }
.dash-head button { width: 8px; height: 8px; border: 1px solid #999; background: #f8f8f8; }
.dash-head svg { width: 7px; height: 7px; }
.dash-grip { flex: 1; height: 5px; border: 1px solid #aaa; background: #f8f8f8; }
.group { display: flex; border-bottom: 1px solid #b9b9b9; }
.side { width: 17px; flex: none; background: #d6d6d6; padding-top: 3px; }
.side svg { width: 16px; height: 16px; margin-left: 3px; }
.side.letter { padding: 3px 0 0 6px; font: 17px/18px "Open Sans", sans-serif; color: #4a76a8; }
.rows { flex: 1; min-width: 0; padding: 1px 0 2px; }
.roomy .rows { padding-top: 2px; }
.row { height: 19px; display: flex; align-items: center; justify-content: flex-end; gap: 1px; }
.row.more { padding-right: 4px; background: linear-gradient(#222, #222) no-repeat right 0 top 15px / 3px 2px; }
.ico { width: 15px; height: 15px; flex: none; }
.ico svg { width: 14px; height: 14px; }
.ico.glyph { font: 14px/15px "Open Sans", sans-serif; color: #222; }
.ico .caret { width: 5px; height: 14px; }
.bar { width: 1px; height: 14px; background: #888; }
.row .combo { width: 111px; }
.row .combo.full { width: 127px; }
.row .combo.mono { font: 8px/12px "Liberation Mono", monospace; }
.row .combo.inset { padding-left: 13px; }
.layer-combo { width: 127px; height: 16px; display: flex; align-items: center; padding-left: 2px; border: 1px solid #b4b4b4; background: #fff; }
.layer-combo svg { width: 12px; height: 12px; }
.layer-combo .sw { width: 10px; height: 10px; }
.row .combo.bare { flex: 1; width: auto; min-width: 0; height: 14px; border: 0; }
.row .combo.off { opacity: 0.6; border-color: #ddd; background-color: #fafafa; }
.heavy { font: bold 15px "Open Sans", sans-serif; text-anchor: middle; fill: #222; }
.mini { font: bold 7px "Liberation Sans", sans-serif; text-anchor: middle; fill: #2a3c58; }

/* Watermark over the corner of the drawing */
.watermark { position: absolute; right: 52px; bottom: 20px; pointer-events: none; opacity: 0.8; }
.watermark text, .wm-paw { fill: #fff; stroke: #b0b0b0; stroke-width: 1px; paint-order: stroke; }
.wm-big, .wm-du { font: bold 39px "Liberation Sans", sans-serif; }
.watermark .wm-big { fill: #e2e2e2; }
.watermark .wm-du { font-size: 28px; fill: #c4c4c4; stroke: none; }
.wm-cjk { font: bold 31px "Noto Sans CJK SC", sans-serif; }
.watermark .wm-url { font: 20px "Noto Sans", sans-serif; stroke-width: 2px; stroke: #c6c6c6; }
```
